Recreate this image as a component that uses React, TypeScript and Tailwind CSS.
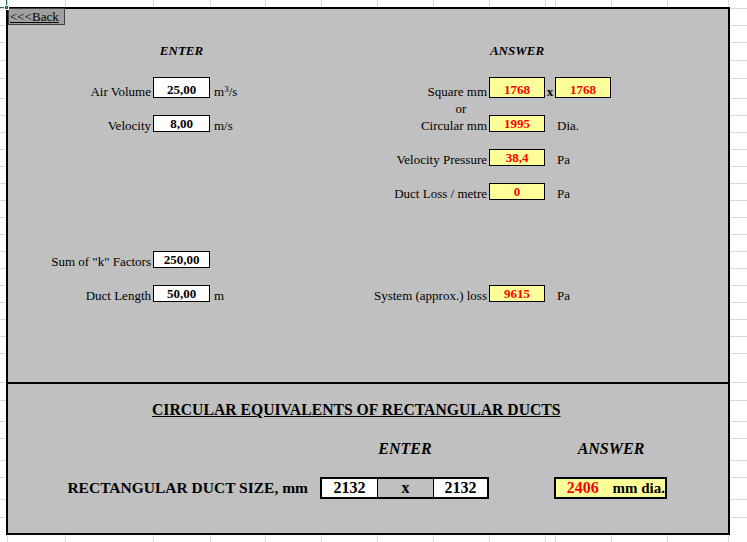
import React from "react";

const colW = [
  "w-[8px]", "w-[58px]", "w-[88px]", "w-[57px]", "w-[55px]", "w-[56px]", "w-[56px]",
  "w-[56px]", "w-[56px]", "w-[56px]", "w-[10px]", "w-[56px]", "w-[56px]", "w-[61px]",
];

const rowH = [
  "h-[2px]", "h-[17px]", "h-[17px]", "h-[18px]", "h-[18px]", "h-[20px]", "h-[17px]",
  "h-[17px]", "h-[17px]", "h-[17px]", "h-[17px]", "h-[17px]", "h-[17px]", "h-[17px]",
  "h-[17px]", "h-[17px]", "h-[17px]", "h-[17px]", "h-[17px]", "h-[17px]", "h-[17px]",
  "h-[29px]", "h-[18px]", "h-[21px]", "h-[17px]", "h-[22px]", "h-[17px]", "h-[22px]",
  "h-[18px]",
];

function HStrip() {
  return (
    <div className="flex h-[7px] shrink-0">
      {colW.map((w, i) => (
        <div key={i} className={`${w} h-full border-r border-[#dadada]`} />
      ))}
      <div className="flex-1" />
    </div>
  );
}

function VStrip({ width }: { width: string }) {
  return (
    <div className={`${width} flex flex-col shrink-0`}>
      {rowH.map((h, i) => (
        <div key={i} className={`${h} w-full border-b border-[#dadada]`} />
      ))}
      <div className="flex-1" />
    </div>
  );
}

const lab = "flex items-end whitespace-nowrap text-[13px] leading-[13px]";
const labR = `${lab} justify-end pr-[2px]`;
const labL = `${lab} justify-start`;
const inBox =
  "bg-white border border-black flex items-center justify-center font-bold text-[13px] leading-[13px]";
const outBox =
  "bg-[#ffff99] border border-black flex items-center justify-center font-bold text-[13px] leading-[13px] text-[#ff0000]";

export default function App() {
  return (
    <div className="relative w-[747px] h-[542px] bg-white overflow-hidden flex flex-col font-['Liberation_Serif','Times_New_Roman',serif] text-black">
      <HStrip />
      <div className="flex h-[528px] shrink-0">
        <VStrip width="w-[6px]" />
        <div className="w-[724px] h-[528px] shrink-0 border-2 border-black bg-[#c0c0c0] flex flex-col">
          {/* upper calculator */}
          <div className="h-[373px] grid grid-cols-[57px_88px_57px_55px_56px_56px_56px_56px_56px_10px_56px_56px_61px] grid-rows-[16px_17px_18px_17px_21px_17px_17px_17px_17px_17px_17px_17px_17px_17px_17px_17px_17px_17px_17px_17px_29px]">
            <div className="col-start-1 row-start-1 -mt-px bg-[#a0a0a0] border border-[#404040] flex items-center pl-[1px] text-[13px] leading-[13px] underline whitespace-nowrap">
              &lt;&lt;&lt;Back
            </div>

            <div className="col-start-3 row-start-3 flex items-end justify-center pb-[3px] font-bold italic text-[13px] leading-[13px]">
              ENTER
            </div>
            <div className="col-start-9 row-start-3 flex items-end justify-center pb-[3px] font-bold italic text-[13px] leading-[13px]">
              ANSWER
            </div>

            {/* row 5 */}
            <div className={`col-start-1 col-span-2 row-start-5 ${labR}`}>Air Volume</div>
            <div className={`col-start-3 row-start-5 pt-[3px] ${inBox}`}>25,00</div>
            <div className={`col-start-4 row-start-5 ${labL} pl-[4px]`}>
              <span>
                m<sup className="text-[9px]">3</sup>/s
              </span>
            </div>
            <div className={`col-start-5 col-span-4 row-start-5 ${labR}`}>Square mm</div>
            <div className={`col-start-9 row-start-5 pt-[3px] ${outBox}`}>1768</div>
            <div className={`col-start-10 row-start-5 ${lab} justify-center font-bold`}>x</div>
            <div className={`col-start-11 row-start-5 pt-[3px] ${outBox}`}>1768</div>

            {/* row 6 */}
            <div className={`col-start-8 row-start-6 ${lab} justify-center`}>or</div>

            {/* row 7 */}
            <div className={`col-start-1 col-span-2 row-start-7 ${labR}`}>Velocity</div>
            <div className={`col-start-3 row-start-7 ${inBox}`}>8,00</div>
            <div className={`col-start-4 row-start-7 ${labL} pl-[4px]`}>m/s</div>
            <div className={`col-start-5 col-span-4 row-start-7 ${labR}`}>Circular mm</div>
            <div className={`col-start-9 row-start-7 ${outBox}`}>1995</div>
            <div className={`col-start-11 row-start-7 ${labL} pl-[2px]`}>Dia.</div>

            {/* row 9 */}
            <div className={`col-start-5 col-span-4 row-start-9 ${labR}`}>Velocity Pressure</div>
            <div className={`col-start-9 row-start-9 ${outBox}`}>38,4</div>
            <div className={`col-start-11 row-start-9 ${labL} pl-[2px]`}>Pa</div>

            {/* row 11 */}
            <div className={`col-start-5 col-span-4 row-start-11 ${labR}`}>Duct Loss / metre</div>
            <div className={`col-start-9 row-start-11 ${outBox}`}>0</div>
            <div className={`col-start-11 row-start-11 ${labL} pl-[2px]`}>Pa</div>

            {/* row 15 */}
            <div className={`col-start-1 col-span-2 row-start-15 ${labR}`}>Sum of "k" Factors</div>
            <div className={`col-start-3 row-start-15 ${inBox}`}>250,00</div>

            {/* row 17 */}
            <div className={`col-start-1 col-span-2 row-start-17 ${labR}`}>Duct Length</div>
            <div className={`col-start-3 row-start-17 ${inBox}`}>50,00</div>
            <div className={`col-start-4 row-start-17 ${labL} pl-[4px]`}>m</div>
            <div className={`col-start-5 col-span-4 row-start-17 ${labR}`}>System (approx.) loss</div>
            <div className={`col-start-9 row-start-17 ${outBox}`}>9615</div>
            <div className={`col-start-11 row-start-17 ${labL} pl-[2px]`}>Pa</div>
          </div>

          {/* lower section */}
          <div className="h-[151px] border-t-2 border-black grid grid-cols-[57px_88px_57px_55px_56px_56px_56px_56px_56px_10px_56px_56px_61px] grid-rows-[16px_21px_17px_22px_17px_22px_18px_16px]">
            <div className="col-start-3 col-span-9 row-start-2 -ml-px flex items-end whitespace-nowrap font-bold text-[15.7px] leading-[16px] pb-[3px] underline">
              CIRCULAR EQUIVALENTS OF RECTANGULAR DUCTS
            </div>
            <div className="col-start-7 row-start-4 flex items-end justify-center pb-[3px] font-bold italic text-[16px] leading-[16px]">
              ENTER
            </div>
            <div className="col-start-11 col-span-2 row-start-4 flex items-end justify-center pb-[3px] font-bold italic text-[16px] leading-[16px]">
              ANSWER
            </div>

            <div className="col-start-1 col-span-5 row-start-6 flex items-center justify-end pr-[13px] whitespace-nowrap font-bold text-[15.5px] leading-[16px]">
              RECTANGULAR DUCT SIZE, mm
            </div>
            <div className="col-start-6 col-span-3 row-start-6 -ml-px border-2 border-black flex font-bold text-[16px] leading-[16px]">
              <div className="w-[56px] bg-white border-r border-black flex items-center justify-center">2132</div>
              <div className="w-[56px] border-r border-black flex items-center justify-center">x</div>
              <div className="w-[53px] bg-white flex items-center justify-center">2132</div>
            </div>
            <div className="col-start-11 col-span-2 row-start-6 -ml-px border-2 border-black bg-[#ffff99] flex items-center font-bold leading-[16px] whitespace-nowrap">
              <span className="w-[55px] text-center text-[16px] text-[#ff0000]">2406</span>
              <span className="pl-[3px] text-[15px]">mm dia.</span>
            </div>
          </div>
        </div>
        <VStrip width="flex-1" />
      </div>
      <HStrip />

      {/* Excel active-cell marker */}
      <div className="absolute left-[6px] top-0 w-[1px] h-[5px] bg-[#217346]" />
      <div className="absolute left-0 top-[7px] w-[4px] h-[1px] bg-[#217346]" />
      <div className="absolute left-[4px] top-[5px] w-[5px] h-[5px] bg-[#217346] border border-white" />
    </div>
  );
}
